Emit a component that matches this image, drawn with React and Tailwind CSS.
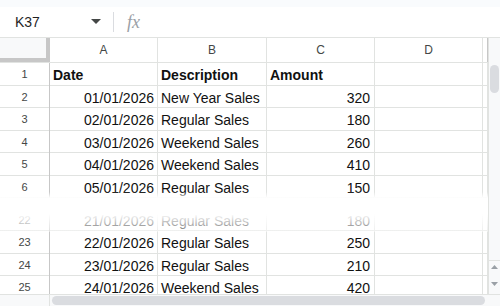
import React from "react";

const top = [
  ["1", "Date", "Description", "Amount", true],
  ["2", "01/01/2026", "New Year Sales", "320"],
  ["3", "02/01/2026", "Regular Sales", "180"],
  ["4", "03/01/2026", "Weekend Sales", "260"],
  ["5", "04/01/2026", "Weekend Sales", "410"],
  ["6", "05/01/2026", "Regular Sales", "150"],
];
const bottom = [
  ["22", "21/01/2026", "Regular Sales", "180"],
  ["23", "22/01/2026", "Regular Sales", "250"],
  ["24", "23/01/2026", "Regular Sales", "210"],
  ["25", "24/01/2026", "Weekend Sales", "420"],
];
const heights = [23, 22, 23, 22, 23, 22];

function Row({ r, h }) {
  const [n, a, b, c, bold] = r;
  return (
    <div
      className="grid grid-cols-[50px_108px_109px_108px_108px_5px] border-b border-[#e1e3e1] text-[14px] text-[#111]"
      style={{ height: h }}
    >
      <div className="border-r border-[#c7c7c7] flex items-center justify-center text-[11px] text-[#444746]">{n}</div>
      {bold ? (
        <>
          <div className="border-r border-[#e1e3e1] flex items-center pl-[3px] pt-[2px] font-bold">{a}</div>
          <div className="border-r border-[#e1e3e1] flex items-center pl-[3px] pt-[2px] font-bold">{b}</div>
          <div className="border-r border-[#e1e3e1] flex items-center pl-[3px] pt-[2px] font-bold">{c}</div>
        </>
      ) : (
        <>
          <div className="border-r border-[#e1e3e1] flex items-center justify-end pr-[3px] pt-[2px]">{a}</div>
          <div className="border-r border-[#e1e3e1] flex items-center pl-[3px] pt-[2px] whitespace-nowrap">{b}</div>
          <div className="border-r border-[#e1e3e1] flex items-center justify-end pr-[4px] pt-[2px]">{c}</div>
        </>
      )}
      <div className="border-r border-[#e1e3e1]"></div>
      <div className="border-r border-[#e1e3e1]"></div>
    </div>
  );
}

export default function App() {
  return (
    <div
      className="w-[500px] h-[306px] overflow-hidden bg-white flex flex-col"
      style={{ fontFamily: '"Liberation Sans", Arial, sans-serif' }}
    >
      <div className="h-[7px] bg-[#f9fbfd]"></div>
      <div className="h-[31px] flex items-center border-b border-[#e1e3e1]">
        <div className="w-[113px] flex items-center pl-[15px] pr-[12px] justify-between">
          <span className="text-[14px] text-[#1f1f1f]">K37</span>
          <svg width="10" height="6" viewBox="0 0 10 6"><path d="M0 0 L10 0 L5 5 Z" fill="#444746" /></svg>
        </div>
        <div className="w-px h-[20px] bg-[#dadce0]"></div>
        <span className="ml-[13px] text-[18px] italic text-[#9aa0a6]" style={{ fontFamily: '"Liberation Serif", serif' }}>fx</span>
      </div>
      <div className="flex flex-1 min-h-0">
        <div className="w-[488px] flex flex-col">
          <div className="grid grid-cols-[50px_108px_109px_108px_108px_5px] h-[25px] border-b border-[#e1e3e1] text-[12px] text-[#444746]">
            <div className="bg-[#f8f9fa] border-r-[4px] border-b-[4px] border-[#c7c7c7]"></div>
            <div className="border-r border-[#e1e3e1] flex items-center justify-center">A</div>
            <div className="border-r border-[#e1e3e1] flex items-center justify-center">B</div>
            <div className="border-r border-[#e1e3e1] flex items-center justify-center">C</div>
            <div className="border-r border-[#e1e3e1] flex items-center justify-center">D</div>
            <div className="border-r border-[#c7c7c7]"></div>
          </div>
          <div className="relative h-[135px] overflow-hidden">
            {top.map((r, i) => (
              <Row key={i} r={r} h={heights[i]} />
            ))}
            <div className="absolute left-0 right-0 bottom-0 h-[6px] bg-gradient-to-b from-transparent to-white"></div>
          </div>
          <div className="h-[16px]"></div>
          <div className="relative h-[80px] overflow-hidden">
            <div className="mt-[-5px]">
              {bottom.map((r, i) => (
                <Row key={i} r={r} h={i % 2 ? 23 : 22} />
              ))}
            </div>
            <div className="absolute left-0 right-0 top-0 h-[18px] bg-gradient-to-b from-white to-white/40"></div>
          </div>
        </div>
        <div className="w-[12px] bg-[#f8f9fa] border-l border-[#e1e3e1] relative">
          <div className="absolute left-[1px] top-[27px] w-[9px] h-[28px] rounded-full bg-[#dadce0]"></div>
          <div className="absolute left-0 right-0 top-[222px] border-t border-[#e1e3e1]"></div>
          <svg className="absolute left-[2px] top-[227px]" width="7" height="4" viewBox="0 0 7 4"><path d="M0 4 L7 4 L3.5 0 Z" fill="#9aa0a6" /></svg>
          <svg className="absolute left-[2px] top-[244px]" width="7" height="4" viewBox="0 0 7 4"><path d="M0 0 L7 0 L3.5 4 Z" fill="#9aa0a6" /></svg>
        </div>
      </div>
      <div className="h-[12px] flex bg-[#f8f9fa] border-t border-[#e1e3e1]">
        <div className="w-[50px] border-r border-[#e1e3e1]"></div>
        <div className="w-[438px] flex items-center pl-[2px]">
          <div className="w-[433px] h-[9px] rounded-full bg-[#dadce0]"></div>
        </div>
        <div className="w-[12px]"></div>
      </div>
    </div>
  );
}
